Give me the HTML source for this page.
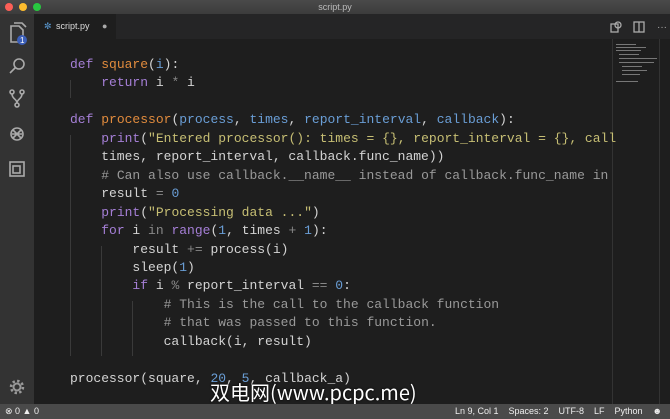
<!DOCTYPE html>
<html><head><meta charset="utf-8"><style>
*{margin:0;padding:0;box-sizing:border-box}
body{width:670px;height:419px;overflow:hidden;background:#1e1e1e;font-family:"Liberation Sans",sans-serif;position:relative}
.title{position:absolute;left:0;top:0;width:670px;height:14px;background:linear-gradient(#4a4a4a,#3c3c3c);color:#bbb;font-size:9px;text-align:center;line-height:14px}
.dot{position:absolute;top:3px;width:8px;height:8px;border-radius:50%}
.act{position:absolute;left:0;top:14px;width:34px;height:390px;background:#333}
.tabs{position:absolute;left:34px;top:14px;width:636px;height:25px;background:#252526}
.tab{position:absolute;left:0;top:0;width:82px;height:25px;background:#1e1e1e;color:#ddd;font-size:9px;line-height:25px;padding-left:22px}
.code{position:absolute;left:70px;top:56px;font-family:"Liberation Mono",monospace;font-size:13px;line-height:18.45px;color:#d4d4d4;white-space:pre}
.k{color:#a57fd6}.f{color:#e18b3d}.p{color:#6a9ed6}.s{color:#c7bf74}.c{color:#999}.o{color:#888}.n{color:#6a9ed6}
.guide{position:absolute;width:1px;background:#3a3a3a}
.status{position:absolute;left:0;top:404px;width:670px;height:15px;background:#4a4a4a;color:#eee;font-size:9px;line-height:15px;white-space:nowrap}
.mm{position:absolute;left:612px;top:39px;width:48px;height:365px;border-left:1px solid #333;border-right:1px solid #333}
.ml{position:absolute;height:1px;background:#777}
</style></head><body>
<div class="title">script.py
<div class="dot" style="left:5px;background:#fc5f57"></div>
<div class="dot" style="left:19px;background:#fdbc2e"></div>
<div class="dot" style="left:33px;background:#28c840"></div></div>
<div class="act">
<svg width="34" height="390" fill="none" stroke="#aaa" stroke-width="1.6">
<path d="M11 12h8l4 4v12h-12z M14 9h8l4 4"/>
<circle cx="22" cy="26" r="5" fill="#3c5fb8" stroke="none"/><text x="20" y="29" fill="#fff" stroke="none" font-size="8" font-family="Liberation Sans">1</text>
<circle cx="19" cy="50" r="5"/><path d="M15 54l-5 5"/>
<circle cx="12" cy="78" r="2"/><circle cx="22" cy="78" r="2"/><circle cx="17" cy="91" r="2"/><path d="M12 80c0 5 5 5 5 9M22 80c0 5-5 5-5 9"/>
<circle cx="17" cy="120" r="6"/><path d="M13 116l8 8M21 116l-8 8M12 120h10"/>
<rect x="10" y="148" width="14" height="14"/><rect x="13" y="152" width="7" height="7"/>
<circle cx="17" cy="373" r="3.5" stroke="#999" stroke-width="2"/><circle cx="17" cy="373" r="6" stroke="#999" stroke-width="2.5" stroke-dasharray="2.4 2.3"/>
</svg></div>
<div class="tabs"><div class="tab"><span style="position:absolute;left:10px;color:#5a9bd5">&#10044;</span>script.py<span style="position:absolute;left:68px;color:#aaa">●</span></div>
<svg style="position:absolute;left:575px;top:6px" width="60" height="14" fill="none" stroke="#aaa" stroke-width="1.3"><rect x="2" y="4" width="7" height="8"/><circle cx="9" cy="5" r="3"/><rect x="25" y="2" width="10" height="10"/><path d="M30 2v10"/><text x="48" y="10" fill="#aaa" stroke="none" font-size="10">···</text></svg></div>
<div class="guide" style="left:70px;top:80px;height:18px"></div><div class="guide" style="left:70px;top:135px;height:221px"></div><div class="guide" style="left:101px;top:246px;height:110px"></div><div class="guide" style="left:132px;top:301px;height:55px"></div>
<div class="mm">
<div class="ml" style="left:3px;top:5px;width:20px"></div><div class="ml" style="left:3px;top:8px;width:30px"></div><div class="ml" style="left:3px;top:11px;width:25px"></div><div class="ml" style="left:6px;top:15px;width:20px"></div><div class="ml" style="left:6px;top:19px;width:38px"></div><div class="ml" style="left:6px;top:23px;width:35px"></div><div class="ml" style="left:9px;top:27px;width:20px"></div><div class="ml" style="left:9px;top:31px;width:25px"></div><div class="ml" style="left:9px;top:35px;width:18px"></div><div class="ml" style="left:3px;top:42px;width:22px"></div>
</div>
<div class="code"><span class="k">def</span> <span class="f">square</span>(<span class="p">i</span>):
    <span class="k">return</span> i <span class="o">*</span> i

<span class="k">def</span> <span class="f">processor</span>(<span class="p">process</span>, <span class="p">times</span>, <span class="p">report_interval</span>, <span class="p">callback</span>):
    <span class="k">print</span>(<span class="s">"Entered processor(): times = {}, report_interval = {}, call</span>
    times, report_interval, callback.func_name))
    <span class="c"># Can also use callback.__name__ instead of callback.func_name in</span>
    result <span class="o">=</span> <span class="n">0</span>
    <span class="k">print</span>(<span class="s">"Processing data ..."</span>)
    <span class="k">for</span> i <span class="o">in</span> <span class="k">range</span>(<span class="n">1</span>, times <span class="o">+</span> <span class="n">1</span>):
        result <span class="o">+=</span> process(i)
        sleep(<span class="n">1</span>)
        <span class="k">if</span> i <span class="o">%</span> report_interval <span class="o">==</span> <span class="n">0</span>:
            <span class="c"># This is the call to the callback function</span>
            <span class="c"># that was passed to this function.</span>
            callback(i, result)

processor(square, <span class="n">20</span>, <span class="n">5</span>, callback_a)</div>
<div style="position:absolute;left:210px;top:380px;font-family:'Noto Sans CJK SC',sans-serif;font-size:20px;line-height:24px;color:#fff;text-shadow:0 0 2px #000">双电网(www.pcpc.me)</div>
<div class="status"><span style="position:absolute;left:5px">⊗ 0 ▲ 0</span><span style="position:absolute;right:8px">Ln 9, Col 1&nbsp;&nbsp;&nbsp;&nbsp;Spaces: 2&nbsp;&nbsp;&nbsp;&nbsp;UTF-8&nbsp;&nbsp;&nbsp;&nbsp;LF&nbsp;&nbsp;&nbsp;&nbsp;Python&nbsp;&nbsp;&nbsp;&nbsp;☻</span></div>
</body></html>
